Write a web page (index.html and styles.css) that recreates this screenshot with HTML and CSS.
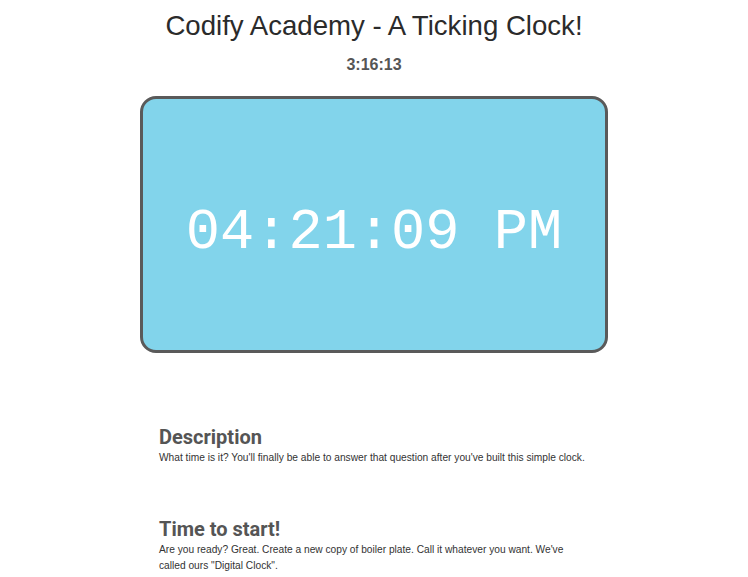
FILE: index.html
```html
<!DOCTYPE html>
<html>
<head>
<meta charset="utf-8">
<link rel="stylesheet" href="styles.css">
</head>
<body>
<header class="top">
  <h1 class="title">Codify Academy - A Ticking Clock!</h1>
  <div class="small-time">3:16:13</div>
</header>
<main class="clock-wrap">
  <div class="clock">04:21:09 PM</div>
</main>
<section class="info">
  <div class="block">
    <h2 class="heading">Description</h2>
    <p class="text">What time is it? You'll finally be able to answer that question after you've built this simple clock.</p>
  </div>
  <div class="block">
    <h2 class="heading">Time to start!</h2>
    <p class="text">Are you ready? Great. Create a new copy of boiler plate. Call it whatever you want. We've called ours "Digital Clock".</p>
  </div>
</section>
</body>
</html>
```
FILE: styles.css
```css
html, body {
  margin: 0;
  padding: 0;
  background: #fff;
}
body {
  font-family: "Liberation Sans", Arial, sans-serif;
  color: #333;
}
.top {
  display: flex;
  flex-direction: column;
  align-items: center;
  padding-top: 9px;
}
.title {
  margin: 0;
  font-size: 27.6px;
  font-weight: normal;
  line-height: 34px;
  color: #2b2b2b;
}
.small-time {
  margin-top: 12px;
  font-size: 16px;
  font-weight: bold;
  color: #555;
  line-height: 20px;
}
.clock-wrap {
  display: flex;
  justify-content: center;
  margin-top: 21px;
}
.clock {
  box-sizing: border-box;
  width: 468px;
  height: 257px;
  background: #82d4eb;
  border: 3px solid #5a5a5a;
  border-radius: 16px;
  display: flex;
  align-items: center;
  justify-content: center;
  font-family: "Liberation Mono", "Courier New", monospace;
  font-size: 57px;
  color: #fff;
  padding-top: 16px;
}
.info {
  width: 430px;
  margin: 72px auto 0;
  display: flex;
  flex-direction: column;
  gap: 51px;
}
.heading {
  margin: 0;
  font-family: Roboto, "Liberation Sans", sans-serif;
  font-weight: bold;
  font-size: 20px;
  line-height: 24px;
  color: #555;
}
.text {
  margin: 1px 0 0;
  font-size: 10.2px;
  line-height: 16px;
  color: #333;
}
```
